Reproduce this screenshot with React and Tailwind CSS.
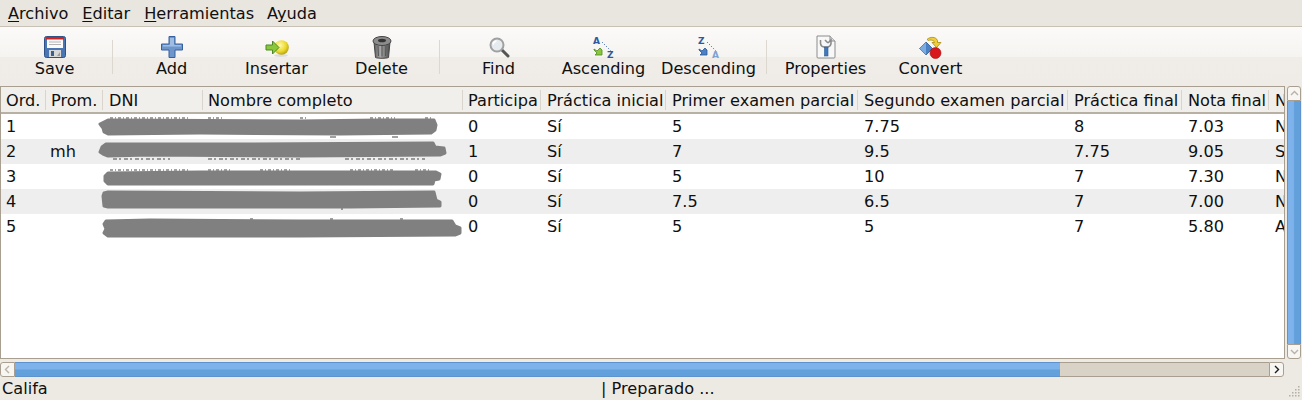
import { Fragment } from 'react'

const COLUMNS = [
  { label: 'Ord.', w: 'w-[45px]', pad: 'pl-[5px]' },
  { label: 'Prom.', w: 'w-[57px]', pad: 'pl-[5px]' },
  { label: 'DNI', w: 'w-[100px]', pad: 'pl-[6px]' },
  { label: 'Nombre completo', w: 'w-[260px]', pad: 'pl-[5px]' },
  { label: 'Participa', w: 'w-[78px]', pad: 'pl-[5px]' },
  { label: 'Práctica inicial', w: 'w-[125px]', pad: 'pl-[6px]' },
  { label: 'Primer examen parcial', w: 'w-[192px]', pad: 'pl-[6px]' },
  { label: 'Segundo examen parcial', w: 'w-[210px]', pad: 'pl-[6px]' },
  { label: 'Práctica final', w: 'w-[114px]', pad: 'pl-[6px]' },
  { label: 'Nota final', w: 'w-[87px]', pad: 'pl-[6px]' },
  { label: 'Nota', w: 'w-[60px]', pad: 'pl-[6px]' },
]

const ROWS = [
  ['1', '', '', '', '0', 'Sí', '5', '7.75', '8', '7.03', 'Notable'],
  ['2', 'mh', '', '', '1', 'Sí', '7', '9.5', '7.75', '9.05', 'Sobresaliente'],
  ['3', '', '', '', '0', 'Sí', '5', '10', '7', '7.30', 'Notable'],
  ['4', '', '', '', '0', 'Sí', '7.5', '6.5', '7', '7.00', 'Notable'],
  ['5', '', '', '', '0', 'Sí', '5', '5', '7', '5.80', 'Aprobado'],
]

// hand smudges covering the DNI and name columns
const BLOBS = [
  'M100 124 L104 122 L108 120 L300 121 L380 120 L434 120 L436 125 L435 130 L431 133 L340 134 L200 133 L108 134 L104 132 L103 128 Z',
  'M100 152 L102 147 L106 144 L250 144 L433 143 L435 147 L444 148 L445 153 L440 155 L300 156 L150 155 L108 156 L103 154 Z',
  'M105 176 L108 173 L200 172 L436 172 L440 174 L439 179 L434 180 L433 184 L300 184 L108 184 L105 181 Z',
  'M103 196 L104 193 L108 192 L300 193 L434 192 L436 200 L440 202 L440 206 L350 207 L108 207 L104 206 Z',
  'M104 224 L106 221 L150 220 L300 221 L452 221 L455 226 L460 228 L460 233 L455 235 L300 236 L108 236 L104 233 L106 229 Z',
]

// bits of the covered text that still show around the smudges
const REMNANTS = [
  { d: 'M110 118H190M208 118H222M300 118H306M370 118H395M425 118H432', dash: '3 2 1 2' },
  { d: 'M330 137H336M392 137H398', dash: '2 0' },
  { d: 'M113 159H170M208 159H300M345 159H425', dash: '4 2 2 3' },
  { d: 'M110 170H190M208 170H232M260 170H290M350 170H395M415 170H430', dash: '3 2 1 2' },
  { d: 'M341 209H343', dash: '2 0' },
  { d: 'M250 219H253M330 219H333M400 219H403', dash: '2 0' },
]

function SaveIcon() {
  return (
    <svg width="24" height="24" viewBox="0 0 24 24">
      <rect x="1.500" y="1.500" width="21" height="21" rx="2" fill="#4a77b4" stroke="#2f5286" />
      <rect x="3" y="2" width="18" height="2.500" fill="#d8201e" />
      <rect x="4" y="4.500" width="16" height="8.500" fill="#fbfbfb" />
      <path d="M6 7h12M6 9.500h12" stroke="#b5b5b5" />
      <rect x="6" y="15" width="12" height="7" fill="#d8d8d8" />
      <rect x="8" y="16" width="3" height="5" fill="#3d5f8f" />
      <path d="M14 21l3-4v4z" fill="#9a9a9a" />
    </svg>
  )
}

function AddIcon() {
  return (
    <svg width="24" height="24" viewBox="0 0 24 24">
      <path d="M9 1.500h6v7.500h7.500v6H15v7.500H9V15H1.500V9H9z" fill="#6f96cb" stroke="#34609f" />
      <path d="M10 3h4v7h-4zM3 10h18v1.500H3z" fill="#a0bde1" />
    </svg>
  )
}

function InsertIcon() {
  return (
    <svg width="24" height="24" viewBox="0 0 24 24">
      <defs>
        <radialGradient id="ball" cx="0.4" cy="0.35" r="0.7">
          <stop offset="0" stopColor="#fff9b0" />
          <stop offset="0.6" stopColor="#ecd92a" />
          <stop offset="1" stopColor="#b09a10" />
        </radialGradient>
      </defs>
      <ellipse cx="16" cy="20.500" rx="7" ry="1.500" fill="#ddd" />
      <circle cx="16.500" cy="12.500" r="7.300" fill="url(#ball)" />
      <path d="M1 10h6.500V6l6.500 6.500-6.500 6.500v-4H1z" fill="#8bc63f" stroke="#4e8a1e" />
    </svg>
  )
}

function DeleteIcon() {
  return (
    <svg width="24" height="24" viewBox="0 0 24 24">
      <defs>
        <linearGradient id="can" x1="0" x2="1" y1="0" y2="0">
          <stop offset="0" stopColor="#5c5c5c" />
          <stop offset="0.4" stopColor="#a8a8a8" />
          <stop offset="1" stopColor="#4a4a4a" />
        </linearGradient>
      </defs>
      <path d="M4 7l1.500 15.500c2 1 11 1 13 0L20 7z" fill="url(#can)" stroke="#444" />
      <path d="M8 11l.5 10M12 11v10.500M16 11l-.5 10" stroke="#555" />
      <ellipse cx="12" cy="6" rx="9" ry="4.500" fill="#8c8c8c" stroke="#444" />
      <ellipse cx="12" cy="5.500" rx="4" ry="1.800" fill="#333" />
    </svg>
  )
}

function FindIcon() {
  return (
    <svg width="24" height="24" viewBox="0 0 24 24">
      <path d="M15 15l6 6" stroke="#555" strokeWidth="3" strokeLinecap="round" />
      <circle cx="10" cy="10" r="6.500" fill="#e6ebf0" stroke="#a0a0a0" strokeWidth="2" />
      <path d="M6 9.500a4.500 4.500 0 0 1 3.500-3.500" stroke="#fff" strokeWidth="1.500" fill="none" />
    </svg>
  )
}

function SortIcon({ top, bottom, bottomColor, arrow, arrowEdge }) {
  return (
    <svg width="24" height="24" viewBox="0 0 24 24">
      <text x="1" y="9" fontFamily="'DejaVu Sans', sans-serif" fontSize="9" fontWeight="700" fill="#2d5a9e">{top}</text>
      <path d="M10 7l9 9" stroke="#2d5a9e" strokeDasharray="1 2" />
      <path d="M2 14l3 2 3-3 2 2v5H3l2-2-3-3z" fill={arrow} stroke={arrowEdge} strokeWidth="0.8" />
      <text x="15" y="23" fontFamily="'DejaVu Sans', sans-serif" fontSize="9" fontWeight="700" fill={bottomColor}>{bottom}</text>
    </svg>
  )
}

function PropertiesIcon() {
  return (
    <svg width="24" height="24" viewBox="0 0 24 24">
      <path d="M3 1h13l5 5v16a1 1 0 0 1-1 1H4a1 1 0 0 1-1-1z" fill="#f8f8f8" stroke="#8c8c8c" />
      <path d="M16 1v5h5" fill="#ddd" stroke="#8c8c8c" />
      <path d="M6.500 5v3.500a4 4 0 0 0 3.500 3.500h4a4 4 0 0 0 3-3.500V5l-2.500 2.500h-1L11 5" fill="none" stroke="#8c8c8c" strokeWidth="1.600" />
      <rect x="10.500" y="12" width="3.500" height="9" fill="#3f79bd" stroke="#2b5a94" strokeWidth="0.6" />
    </svg>
  )
}

function ConvertIcon() {
  return (
    <svg width="24" height="24" viewBox="0 0 24 24">
      <path d="M7 7l6.500 6.500L7 20 .5 13.500z" fill="#4a80c4" stroke="#2a5796" strokeWidth="0.8" />
      <path d="M7 7v13L.5 13.500z" fill="#7ca9de" />
      <path d="M8 4.500c3-3 9-3 10.500 1v2H22l-4.500 5-4.500-5h2.500c0-2-3.500-3-6-2z" fill="#f0cd3a" stroke="#a68a12" strokeWidth="0.8" />
      <circle cx="16.500" cy="18" r="5.500" fill="#d8161c" stroke="#a01014" strokeWidth="0.6" />
    </svg>
  )
}

function ToolButton({ label, children }) {
  return (
    <div className="flex w-[105px] flex-col items-center">
      <div className="flex h-6 w-6 items-center justify-center">{children}</div>
      <span className="mt-px leading-[18px]">{label}</span>
    </div>
  )
}

function ToolSep() {
  return <div className="ml-[5px] mr-[6px] mt-[5px] h-[34px] w-px bg-[#dcd8d0]" />
}

function MenuLabel({ before = '', mark, after, className }) {
  return (
    <span className={className}>
      {before}
      <span className="underline underline-offset-2">{mark}</span>
      {after}
    </span>
  )
}

function Chevron({ d }) {
  return (
    <svg width="9" height="9" viewBox="0 0 9 9">
      <path d={d} fill="none" stroke="currentColor" strokeWidth="1.400" />
    </svg>
  )
}

export default function App() {
  return (
    <div className="flex h-[400px] w-[1302px] flex-col overflow-hidden bg-[#edeae4] font-['DejaVu_Sans',sans-serif] text-[16.15px] text-[#101010]">
      <div className="flex h-[27px] shrink-0 items-center border-b border-[#c8c1b5] bg-[#e9e5df] pt-[3px]">
        <MenuLabel className="ml-2" mark="A" after="rchivo" />
        <MenuLabel className="ml-[14px]" mark="E" after="ditar" />
        <MenuLabel className="ml-[14px]" mark="H" after="erramientas" />
        <MenuLabel className="ml-[13px]" before="A" mark="y" after="uda" />
      </div>

      <div className="flex h-[59px] shrink-0 items-start bg-[linear-gradient(to_bottom,#fbfaf9_0%,#f6f4f1_50%,#f0ede8_51%,#efece7_100%)] pl-0.5 pt-2">
        <ToolButton label="Save"><SaveIcon /></ToolButton>
        <ToolSep />
        <ToolButton label="Add"><AddIcon /></ToolButton>
        <ToolButton label="Insertar"><InsertIcon /></ToolButton>
        <ToolButton label="Delete"><DeleteIcon /></ToolButton>
        <ToolSep />
        <ToolButton label="Find"><FindIcon /></ToolButton>
        <ToolButton label="Ascending">
          <SortIcon top="A" bottom="Z" bottomColor="#2d5a9e" arrow="#8bc63f" arrowEdge="#4e8a1e" />
        </ToolButton>
        <ToolButton label="Descending">
          <SortIcon top="Z" bottom="A" bottomColor="#7ea3d3" arrow="#4a80c4" arrowEdge="#2a5796" />
        </ToolButton>
        <ToolSep />
        <ToolButton label="Properties"><PropertiesIcon /></ToolButton>
        <ToolButton label="Convert"><ConvertIcon /></ToolButton>
      </div>

      <div className="flex h-[273px] shrink-0">
        <div className="h-full w-[1285px] shrink-0 overflow-hidden border border-[#a89f91] bg-white">
          <div className="flex h-[27px] border-b-2 border-[#b8b0a3] bg-[#f1efeb]">
            {COLUMNS.map((col) => (
              <div key={col.label} className={`${col.w} flex shrink-0 items-center`}>
                <span className={`mt-[3px] grow overflow-hidden whitespace-nowrap ${col.pad}`}>{col.label}</span>
                <span className="h-[20px] w-px shrink-0 bg-[#d9d5cd]" />
              </div>
            ))}
          </div>
          {ROWS.map((row, r) => (
            <div key={row[0]} className={`flex h-[25px] items-center pt-px ${r % 2 === 1 ? 'bg-[#eeeeee]' : 'bg-white'}`}>
              {row.map((cell, c) => (
                <div key={c} className={`${COLUMNS[c].w} shrink-0 overflow-hidden whitespace-nowrap ${c === 1 ? 'pl-[4px]' : COLUMNS[c].pad}`}>
                  {cell}
                </div>
              ))}
            </div>
          ))}
        </div>
        <div className="ml-0.5 flex h-full w-[14px] shrink-0 flex-col">
          <div className="flex h-[15px] items-center justify-center rounded-t-[3px] border border-[#a89f91] bg-[#f7f6f3] text-[#b8b2a8]">
            <Chevron d="M1 6l3.500-3.500L8 6" />
          </div>
          <div className="grow border-x border-[#5f93cf] bg-[linear-gradient(to_right,#7db3ea_0%,#7db3ea_45%,#62a0dc_55%,#62a0dc_100%)]" />
          <div className="flex h-[15px] items-center justify-center rounded-b-[3px] border border-[#a89f91] bg-[#f7f6f3] text-[#b8b2a8]">
            <Chevron d="M1 3l3.500 3.500L8 3" />
          </div>
        </div>
      </div>

      <div className="mt-[3px] flex h-[15px] w-[1284px] shrink-0">
        <div className="flex w-[15px] shrink-0 items-center justify-center rounded-l-[3px] border border-[#a89f91] bg-[#f7f6f3] text-[#b8b2a8]">
          <Chevron d="M6 1L2.500 4.500 6 8" />
        </div>
        <div className="w-[1045px] shrink-0 border-y border-[#5f93cf] bg-[linear-gradient(to_bottom,#7db3ea_0%,#7db3ea_45%,#62a0dc_55%,#62a0dc_100%)]" />
        <div className="grow border-y border-[#a89f91] bg-[#d8d2c7]" />
        <div className="flex w-[15px] shrink-0 items-center justify-center rounded-r-[3px] border border-[#a89f91] bg-[#f7f6f3] text-[#1c1c1c]">
          <Chevron d="M3 1l3.500 3.500L3 8" />
        </div>
      </div>

      <div className="relative flex h-[22px] shrink-0 items-center pt-[3px]">
        <span className="w-[601px] shrink-0 pl-0.5">Califa</span>
        <span>| Preparado ...</span>
        <svg className="absolute bottom-0.5 right-0.5" width="12" height="12" viewBox="0 0 12 12" fill="#b5afa4">
          {[[10, 1], [7, 4], [10, 4], [4, 7], [7, 7], [10, 7], [1, 10], [4, 10], [7, 10], [10, 10]].map(([x, y]) => (
            <Fragment key={`${x}-${y}`}>
              <rect x={x} y={y} width="1.500" height="1.500" />
            </Fragment>
          ))}
        </svg>
      </div>

      {/* smudges lie over the table */}
      <svg className="pointer-events-none absolute left-0 top-0" width="1302" height="400">
        {REMNANTS.map((r) => (
          <path key={r.d} d={r.d} fill="none" stroke="#444" strokeWidth="1" strokeDasharray={r.dash} />
        ))}
        {BLOBS.map((d) => (
          <path key={d} d={d} fill="#808080" stroke="#808080" strokeWidth="3" strokeLinejoin="round" />
        ))}
      </svg>
    </div>
  )
}
